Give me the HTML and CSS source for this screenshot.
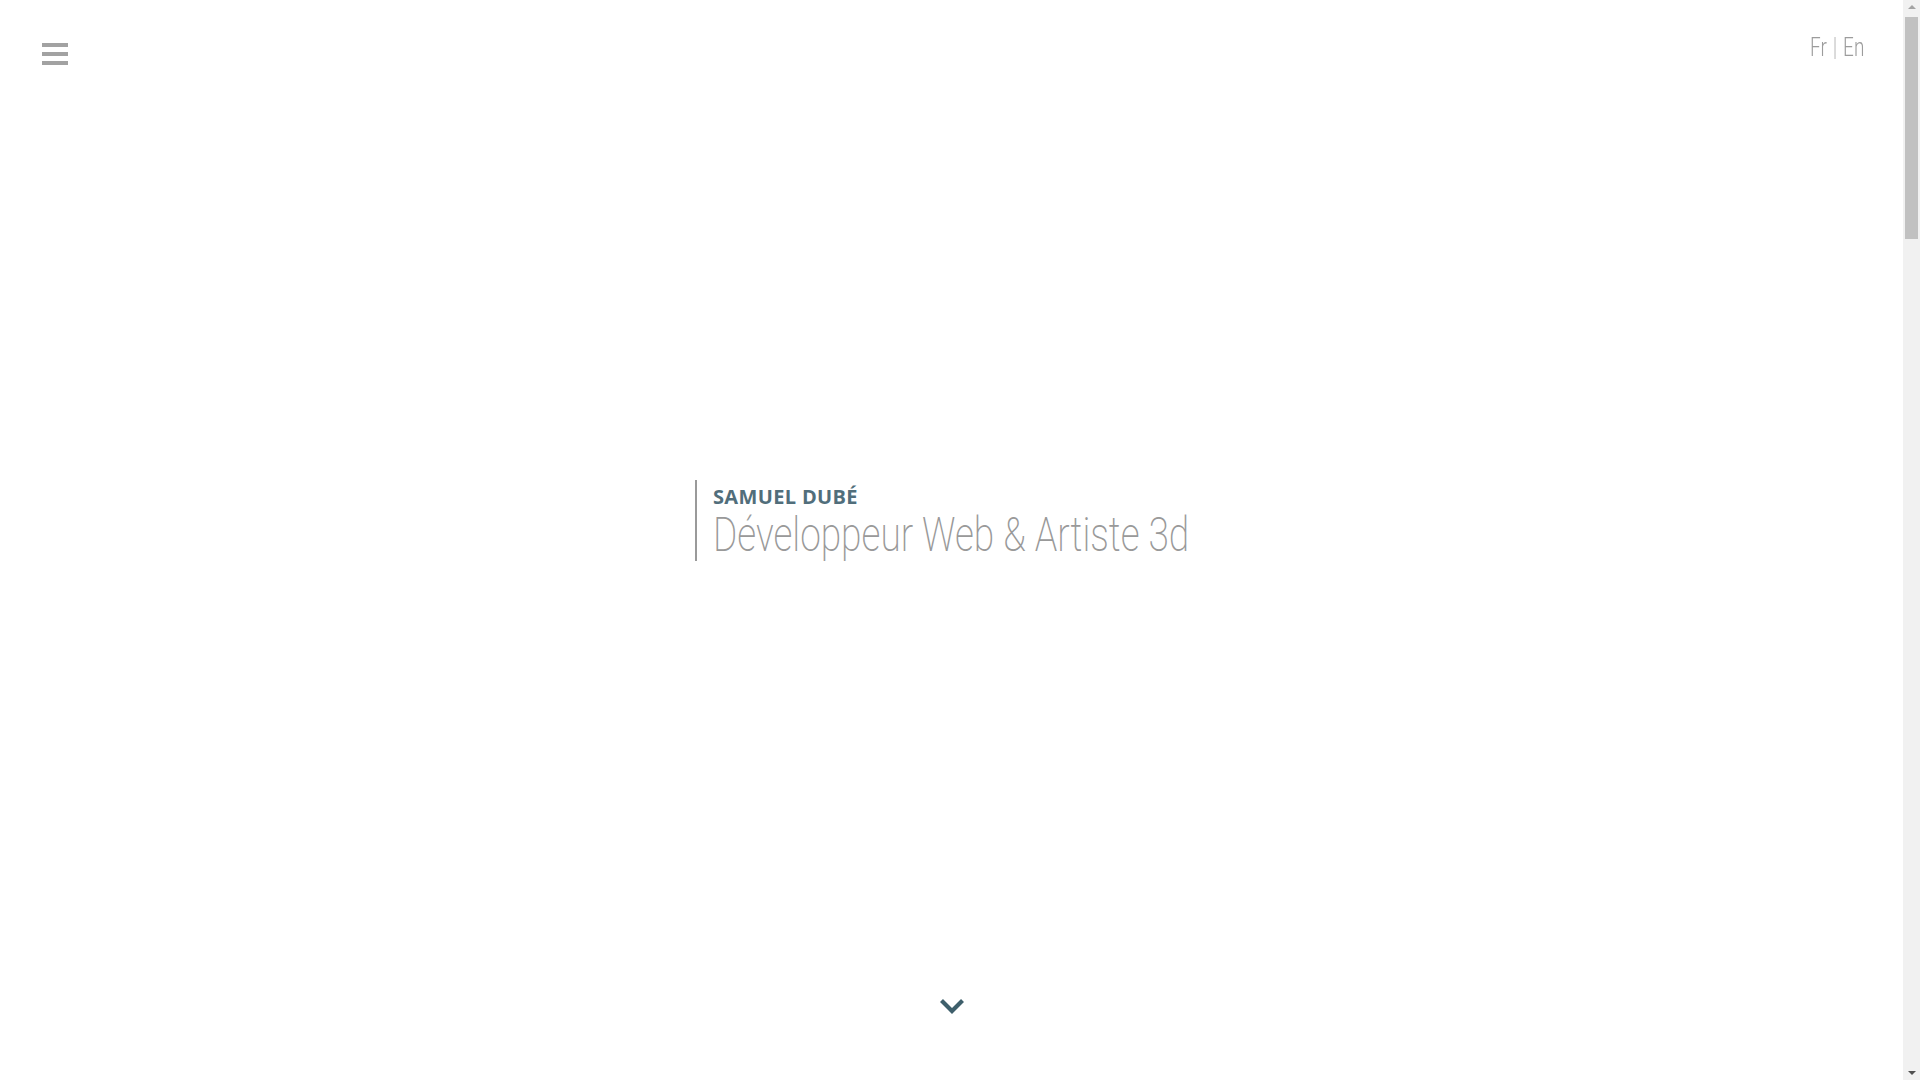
FILE: index.html
```html
<!DOCTYPE html>
<html lang="fr">
<head>
<meta charset="utf-8">
<title>Samuel Dubé</title>
<link rel="stylesheet" href="styles.css">
</head>
<body>
<header class="topbar">
  <button class="menu-btn" aria-label="Menu">
    <span class="bar"></span><span class="bar"></span><span class="bar"></span>
  </button>
  <nav class="lang"><a href="#">Fr</a><span class="sep">|</span><a href="#">En</a></nav>
</header>
<main class="page">
  <section class="hero">
    <div class="intro">
      <div class="name">SAMUEL DUBÉ</div>
      <div class="role"><span class="role-text">Développeur Web &amp; Artiste 3d</span></div>
    </div>
    <a class="down" href="#about" aria-label="Défiler">
      <svg width="26" height="17" viewBox="0 0 26 17"><polyline points="2.5,2.5 13,13 23.5,2.5" fill="none" stroke="#3e5f6b" stroke-width="4.2" stroke-linecap="butt" stroke-linejoin="miter"/></svg>
    </a>
  </section>
  <section class="section" id="about"></section>
  <section class="section"></section>
  <section class="section"></section>
  <section class="section"></section>
</main>
<div class="scrollbar" aria-hidden="true">
  <span class="arrow up"></span>
  <span class="thumb"></span>
  <span class="arrow down-arrow"></span>
</div>
</body>
</html>
```
FILE: styles.css
```css
html, body {
  margin: 0;
  padding: 0;
  background: #fff;
}
body {
  font-family: "Open Sans", "Liberation Sans", sans-serif;
}
.page {
  padding-right: 17px;
}
.topbar {
  position: fixed;
  top: 0;
  left: 0;
  right: 17px;
  display: flex;
  justify-content: space-between;
  align-items: flex-start;
  padding: 0 39px 0 42px;
  z-index: 10;
}
.menu-btn {
  margin-top: 43px;
  padding: 0;
  border: 0;
  background: none;
  display: flex;
  flex-direction: column;
  gap: 5px;
  cursor: pointer;
}
.bar {
  display: block;
  width: 26px;
  height: 4px;
  background: #a2a2a2;
}
.lang {
  margin-top: 33px;
  font-family: "Roboto", sans-serif;
  font-weight: 300;
  font-size: 25px;
  line-height: 1.172;
  color: #9c9c9c;
  display: flex;
  align-items: baseline;
  transform: scaleX(0.76);
  transform-origin: right top;
}
.lang a {
  color: #9c9c9c;
  text-decoration: none;
}
.sep {
  margin: 0 8px;
  font-weight: 200;
}
.hero {
  height: 100vh;
  box-sizing: border-box;
  padding: 43px 0 65px;
  display: flex;
  flex-direction: column;
  align-items: center;
}
.intro {
  margin-top: auto;
  width: 496px;
  height: 81px;
  margin-left: -17px;
  border-left: 2px solid #9a9a9a;
  padding-left: 16px;
  box-sizing: border-box;
}
.name {
  margin-top: 3px;
  font-family: "Open Sans", sans-serif;
  font-weight: 700;
  font-size: 20px;
  line-height: 28px;
  height: 28px;
  color: #516e7b;
  letter-spacing: 0.35px;
}
.role {
  font-family: "Roboto", sans-serif;
  font-weight: 200;
  font-size: 48px;
  line-height: 48px;
  height: 48px;
  color: #999;
  white-space: nowrap;
}
.role-text {
  display: inline-block;
  transform: scaleX(0.772);
  transform-origin: left center;
}
.down {
  margin-top: auto;
  display: block;
  width: 26px;
  height: 17px;
}
.down svg {
  display: block;
}
.section {
  height: 1000px;
}
.scrollbar {
  position: fixed;
  top: 0;
  right: 0;
  width: 17px;
  height: 100vh;
  background: #f1f1f1;
  display: flex;
  flex-direction: column;
  align-items: center;
  z-index: 20;
}
.arrow {
  display: block;
  width: 0;
  height: 0;
  border-left: 4px solid transparent;
  border-right: 4px solid transparent;
}
.arrow.up {
  margin-top: 5px;
  border-bottom: 4px solid #a3a3a3;
}
.thumb {
  display: block;
  margin-top: 8px;
  width: 13px;
  height: 222px;
  background: #c1c1c1;
}
.down-arrow {
  margin-top: auto;
  margin-bottom: 5px;
  border-top: 4px solid #505050;
}
```
